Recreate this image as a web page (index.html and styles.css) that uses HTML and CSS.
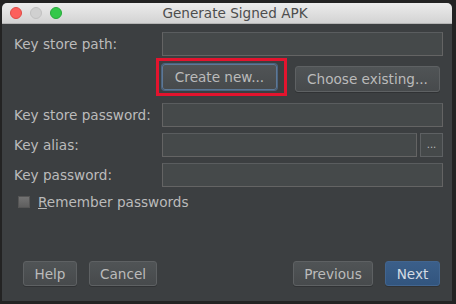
FILE: index.html
```html
<!DOCTYPE html>
<html lang="en">
<head>
  <meta charset="UTF-8">
  <title>Generate Signed APK</title>
  <link rel="stylesheet" href="styles.css">
</head>
<body>

  <div class="window">
    <div class="titlebar">
      <div class="lights">
        <span class="light red"></span>
        <span class="light gray"></span>
        <span class="light green"></span>
      </div>
      <div class="title">Generate Signed APK</div>
    </div>

    <div class="content">
      <div class="row">
        <label>Key store path:</label>
        <div class="field"></div>
      </div>

      <div class="store-buttons">
        <div class="create-wrap">
          <button class="btn focused">Create new...</button>
          <div class="highlight"></div>
        </div>
        <button class="btn choose">Choose existing...</button>
      </div>

      <div class="rows">
        <div class="row">
          <label>Key store password:</label>
          <div class="field"></div>
        </div>
        <div class="row">
          <label>Key alias:</label>
          <div class="alias">
            <div class="field"></div>
            <button class="dots">...</button>
          </div>
        </div>
        <div class="row">
          <label>Key password:</label>
          <div class="field"></div>
        </div>
      </div>

      <div class="remember">
        <span class="checkbox"></span>
        <span><u>R</u>emember passwords</span>
      </div>

      <div class="footer">
        <div class="group">
          <button class="btn help">Help</button>
          <button class="btn cancel">Cancel</button>
        </div>
        <div class="group">
          <button class="btn previous">Previous</button>
          <button class="btn next">Next</button>
        </div>
      </div>
    </div>
  </div>

</body>
</html>
```

FILE: styles.css
```css
/* reset */
* { margin:0; padding:0; box-sizing:border-box }
html, body { height:100%; }
body {
  background:#232323;
  font-family:"DejaVu Sans", sans-serif;
  font-size:13.6px;
  color:#bbbbbb;
  overflow:hidden;
}

/* window frame */
.window {
  margin:3px 0 0 2px;
  width:450px; height:298px;
  background:#3c3f41;
  border-radius:5px 5px 0 0;
  display:flex; flex-direction:column;
  overflow:hidden;
}

/* title bar */
.titlebar {
  height:21px;
  background:linear-gradient(#ececec, #d3d3d3);
  border-bottom:1px solid #b5b5b5;
  display:flex; align-items:center;
}
.lights { display:flex; gap:8px; padding-left:8px; }
.light {
  width:12px; height:12px; border-radius:50%;
}
.light.red   { background:#fc605c; border:1px solid #de4a45; }
.light.gray  { background:#d0d0d0; border:1px solid #c0c0c0; }
.light.green { background:#34c84a; border:1px solid #26a93a; }
.title {
  flex:1;
  text-align:center;
  color:#4d4d4d;
  font-size:13.6px;
  margin-right:44px;
}

/* form */
.content {
  flex:1;
  padding:8px 9px 15px 12px;
  display:flex; flex-direction:column;
}
.row {
  display:grid;
  grid-template-columns:148px 1fr;
  align-items:center;
  height:24px;
}
.field {
  height:24px;
  background:#45494a;
  border:1px solid #646464;
  border-top-color:#5a5d5f;
}
.rows { display:flex; flex-direction:column; gap:6px; }

.alias { display:flex; gap:3px; }
.alias .field { flex:1; }
.dots {
  width:23px; height:24px;
  background:#45494a;
  border:1px solid #5e6163;
  color:#bbbbbb;
  font-family:inherit; font-size:10px;
  line-height:10px;
}

/* create / choose */
.store-buttons {
  display:flex; justify-content:space-between; align-items:flex-start;
  padding:8px 3px 0 148px;
  margin-bottom:11px;
}
.create-wrap { position:relative; }
.highlight {
  position:absolute; top:-6px; left:-6px; right:-10px; bottom:-6px;
  border:3px solid #e3142e;
  pointer-events:none;
}

/* buttons */
.btn {
  height:26px;
  background:linear-gradient(#505456, #474a4c);
  border:1px solid #5e6163;
  border-radius:3px;
  color:#bbbbbb;
  font-family:inherit; font-size:13.6px;
  box-shadow:0 1px 0 rgba(0,0,0,.2);
}
.btn.focused {
  width:115px;
  border-color:#5d7897;
  box-shadow:0 0 0 1px #4b6480;
}
.btn.choose { width:145px; margin-top:2px; }
.footer .btn { height:25px; }
.btn.help { width:54px; }
.btn.cancel { width:68px; }
.btn.previous { width:80px; }
.btn.next {
  width:55px;
  background:linear-gradient(#3b5f8a, #32557e);
  border-color:#42658f;
  color:#d4dbe4;
}

/* checkbox */
.remember {
  display:flex; align-items:center; gap:8px;
  padding-left:4px;
  margin-top:7px;
}
.checkbox {
  width:12px; height:12px;
  background:linear-gradient(#737373, #5e5e5e);
  border:1px solid #555;
}

/* footer */
.footer {
  margin-top:auto;
  display:flex; justify-content:space-between;
  padding:0 3px 0 9px;
}
.group { display:flex; gap:12px; }
```
